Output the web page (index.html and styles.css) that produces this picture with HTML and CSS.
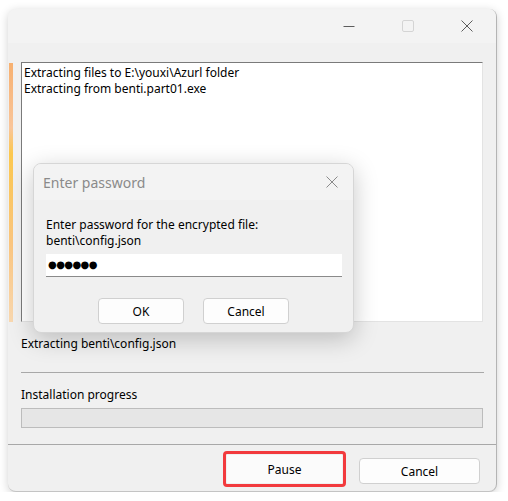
FILE: index.html
```html
<!DOCTYPE html>
<html>
<head>
<meta charset="utf-8">
<link rel="stylesheet" href="styles.css">
</head>
<body>
<div class="window">
  <div class="titlebar">
    <div class="cap"><svg width="12" height="12" viewBox="0 0 12 12"><path d="M0.5 6.5H11.5" stroke="#5c5c5c" stroke-width="1"/></svg></div>
    <div class="cap"><svg width="12" height="12" viewBox="0 0 12 12"><rect x="0.5" y="0.5" width="11" height="11" rx="1.5" fill="none" stroke="#d4d4d4" stroke-width="1"/></svg></div>
    <div class="cap"><svg width="12" height="12" viewBox="0 0 12 12"><path d="M0.5 0.5L11.5 11.5M11.5 0.5L0.5 11.5" stroke="#5c5c5c" stroke-width="1"/></svg></div>
  </div>
  <div class="content">
    <div class="top">
      <div class="strip"></div>
      <div class="log">
        <div>Extracting files to E:\youxi\Azurl folder</div>
        <div>Extracting from benti.part01.exe</div>
      </div>
    </div>
    <div class="status">Extracting benti\config.json</div>
    <div class="sep"></div>
    <div class="plabel">Installation progress</div>
    <div class="progress"></div>
  </div>
  <div class="footer">
    <div class="hl"><button class="btn pause">Pause</button></div>
    <button class="btn cancel">Cancel</button>
  </div>

  <div class="dialog">
    <div class="dtitle">
      <span>Enter password</span>
      <svg width="12" height="12" viewBox="0 0 12 12"><path d="M0.5 0.5L11.5 11.5M11.5 0.5L0.5 11.5" stroke="#8a8a8a" stroke-width="1"/></svg>
    </div>
    <div class="dbody">
      <div class="dlabel">Enter password for the encrypted file:<br>benti\config.json</div>
      <div class="dinput">●●●●●●</div>
      <div class="dbtns">
        <button class="btn dbtn">OK</button>
        <button class="btn dbtn">Cancel</button>
      </div>
    </div>
  </div>
</div>
</body>
</html>
```

FILE: styles.css
```css
* { box-sizing: border-box; }
html, body { margin: 0; padding: 0; background: #ffffff; }
body {
  font-family: "Segoe UI", "Noto Sans", "Liberation Sans", sans-serif;
  font-size: 12px;
  color: #000;
}
.window {
  position: relative;
  margin: 9px 0 0 8px;
  width: 489px;
  height: 483px;
  background: #f0f0f0;
  border-radius: 8px;
  border-right: 1px solid #b4b4b4;
  border-bottom: 1px solid #c4c4c4;
  box-shadow: 0 2px 10px rgba(0,0,0,0.18);
  overflow: hidden;
}
.titlebar {
  height: 34px;
  background: #f3f3f3;
  display: flex;
  justify-content: flex-end;
}
.cap {
  width: 59px;
  height: 34px;
  display: flex;
  align-items: center;
  justify-content: center;
}
.content {
  padding: 19px 13px 0 1px;
}
.top {
  display: flex;
  gap: 8px;
  height: 260px;
}
.strip {
  width: 4px;
  margin-top: 1px;
  background: linear-gradient(to bottom, #f7b070 0%, #f9c59a 25%, #fcc84e 35%, #fbc680 70%, #f9d8b0 100%);
}
.log {
  flex: 1;
  background: #fff;
  border-top: 1px solid #7a7a7a;
  border-left: 1px solid #7a7a7a;
  border-right: 1px solid #e3e3e3;
  border-bottom: 1px solid #e3e3e3;
  padding: 2px 2px;
  line-height: 16px;
}
.status {
  margin: 14px 0 0 12px;
  line-height: 16px;
}
.sep {
  margin: 20px 0 0 12px;
  height: 1px;
  background: #a8a8a8;
  width: 463px;
}
.plabel {
  margin: 14px 0 0 12px;
  line-height: 16px;
}
.progress {
  margin: 5px 0 0 12px;
  width: 462px;
  height: 20px;
  background: #e6e6e6;
  border: 1px solid #bcbcbc;
}
.footer {
  position: absolute;
  left: 0; right: 0; bottom: 0;
  height: 47px;
  border-top: 1px solid #a8a8a8;
  display: flex;
  align-items: flex-start;
  padding: 6px 0 0 215px;
}
.btn {
  font-family: inherit;
  font-size: 12px;
  color: #000;
  background: #fdfdfd;
  border: 1px solid #d0d0d0;
  border-radius: 4px;
  padding: 0;
}
.hl {
  border: 3px solid #f23a3d;
  border-radius: 4px;
  padding: 1px;
  width: 123px;
  height: 36px;
}
.pause {
  width: 100%;
  height: 100%;
  border: none;
  border-radius: 0;
  background: #fbfbfb;
}
.cancel {
  margin: 7px 0 0 13px;
  width: 121px;
  height: 26px;
}
.dialog {
  position: absolute;
  left: 25px;
  top: 154px;
  width: 321px;
  height: 170px;
  background: #f0f0f0;
  border: 1px solid #d6d6d6;
  border-radius: 8px;
  box-shadow: 0 6px 24px rgba(0,0,0,0.22);
  overflow: hidden;
}
.dtitle {
  height: 36px;
  background: #f3f3f3;
  display: flex;
  align-items: center;
  justify-content: space-between;
  padding: 0 15px 0 9px;
  font-size: 14px;
  color: #8a8a8a;
}
.dbody {
  padding: 17px 11px 0 12px;
}
.dlabel {
  line-height: 16px;
}
.dinput {
  margin-top: 5px;
  height: 23px;
  background: #fff;
  border-bottom: 1px solid #8a8a8a;
  padding-left: 2px;
  font-family: "DejaVu Sans", sans-serif;
  font-size: 10px;
  line-height: 22px;
  letter-spacing: -0.6px;
}
.dbtns {
  display: flex;
  gap: 19px;
  margin: 21px 0 0 52px;
}
.dbtn {
  width: 86px;
  height: 26px;
}
```
